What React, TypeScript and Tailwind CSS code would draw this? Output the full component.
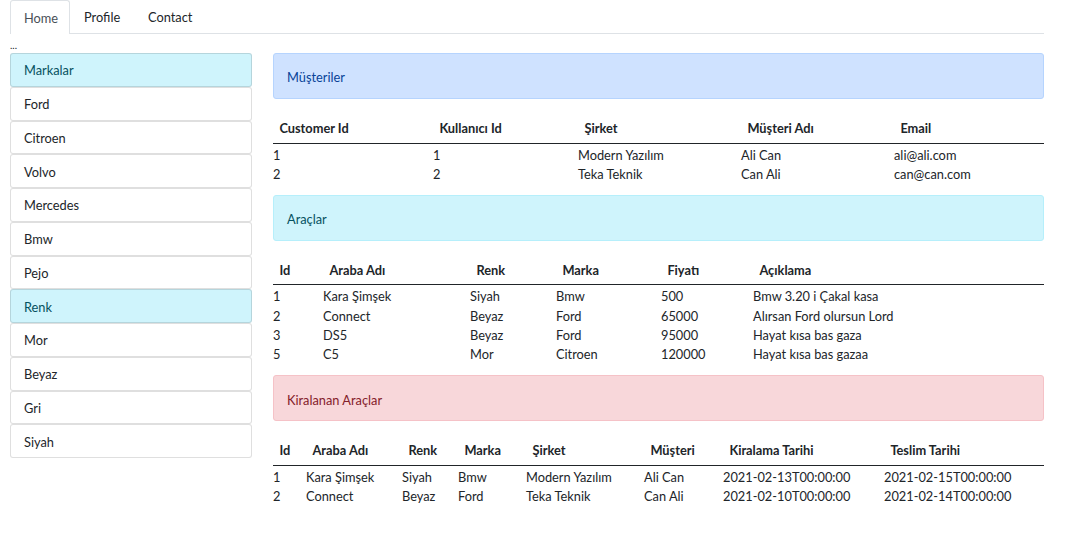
import React from 'react';

type Tone = 'primary' | 'info' | 'danger';

const alertTone: Record<Tone, string> = {
    primary: 'bg-[#cfe2ff] border-[#b6d4fe] text-[#084298]',
    info: 'bg-[#cff4fc] border-[#b6effb] text-[#055160]',
    danger: 'bg-[#f8d7da] border-[#f5c2c7] text-[#842029]'
};

const brands = ['Ford', 'Citroen', 'Volvo', 'Mercedes', 'Bmw', 'Pejo'];
const colors = ['Mor', 'Beyaz', 'Gri', 'Siyah'];

interface Section {
    title: string;
    tone: Tone;
    widths: number[];
    head: string[];
    rows: string[][];
}

const sections: Section[] = [
    {
        title: 'Müşteriler',
        tone: 'primary',
        widths: [160, 145, 163, 153, 150],
        head: ['Customer Id', 'Kullanıcı Id', 'Şirket', 'Müşteri Adı', 'Email'],
        rows: [
            ['1', '1', 'Modern Yazılım', 'Ali Can', 'ali@ali.com'],
            ['2', '2', 'Teka Teknik', 'Can Ali', 'can@can.com']
        ]
    },
    {
        title: 'Araçlar',
        tone: 'info',
        widths: [50, 147, 86, 105, 92, 291],
        head: ['Id', 'Araba Adı', 'Renk', 'Marka', 'Fiyatı', 'Açıklama'],
        rows: [
            ['1', 'Kara Şimşek', 'Siyah', 'Bmw', '500', 'Bmw 3.20 i Çakal kasa'],
            ['2', 'Connect', 'Beyaz', 'Ford', '65000', 'Alırsan Ford olursun Lord'],
            ['3', 'DS5', 'Beyaz', 'Ford', '95000', 'Hayat kısa bas gaza'],
            ['5', 'C5', 'Mor', 'Citroen', '120000', 'Hayat kısa bas gazaa']
        ]
    },
    {
        title: 'Kiralanan Araçlar',
        tone: 'danger',
        widths: [33, 96, 56, 68, 118, 79, 161, 160],
        head: ['Id', 'Araba Adı', 'Renk', 'Marka', 'Şirket', 'Müşteri', 'Kiralama Tarihi', 'Teslim Tarihi'],
        rows: [
            ['1', 'Kara Şimşek', 'Siyah', 'Bmw', 'Modern Yazılım', 'Ali Can', '2021-02-13T00:00:00', '2021-02-15T00:00:00'],
            ['2', 'Connect', 'Beyaz', 'Ford', 'Teka Teknik', 'Can Ali', '2021-02-10T00:00:00', '2021-02-14T00:00:00']
        ]
    }
];

const ListItem: React.FC<{ label: string; active?: boolean }> = ({ label, active }) => (
    <div
        className={
            'h-[33.75px] flex items-center pt-[2px] px-[13px] border border-black/[0.125] rounded-[3px] ' +
            (active ? 'bg-[#cff4fc] text-[#055160]' : 'bg-white text-[#212529]')
        }
    >
        {label}
    </div>
);

export default function App() {
    return (
        <div className="w-[1080px] min-h-[542px] bg-white text-[#212529] font-['Lato',sans-serif] text-[12.8px] leading-[19.2px]">
            <div className="ml-[10px] w-[1034px]">
                {/* tabs */}
                <div className="flex h-[34px] border-b border-[#dee2e6]">
                    <div className="w-[60px] h-[34px] pl-[13px] pt-[2px] flex items-center border border-b-0 border-[#dee2e6] rounded-t-[3px] bg-white text-[#495057]">
                        Home
                    </div>
                    <div className="w-[64px] h-[33px] pl-[14px] pt-[2px] flex items-center">Profile</div>
                    <div className="w-[64px] h-[33px] pl-[14px] pt-[2px] flex items-center">Contact</div>
                </div>
                <div className="h-[19px] text-[10px] leading-[19px] pt-[2px]">...</div>

                <div className="flex gap-[21px]">
                    <div className="w-[242px] shrink-0">
                        <ListItem label="Markalar" active />
                        {brands.map((b) => (
                            <ListItem key={b} label={b} />
                        ))}
                        <ListItem label="Renk" active />
                        {colors.map((c) => (
                            <ListItem key={c} label={c} />
                        ))}
                    </div>

                    <div className="flex-1">
                        {sections.map((s) => (
                            <div key={s.title}>
                                <div className={'h-[46px] flex items-center pt-[4px] px-[13px] border rounded-[3px] mb-[13px] ' + alertTone[s.tone]}>
                                    {s.title}
                                </div>
                                <table className="w-full table-fixed border-collapse mb-[13px]">
                                    <colgroup>
                                        {s.widths.map((w, i) => (
                                            <col key={i} style={{ width: w }} />
                                        ))}
                                    </colgroup>
                                    <thead>
                                        <tr className="border-b-[1.6px] border-[#212529]">
                                            {s.head.map((h) => (
                                                <th key={h} className="h-[31px] pt-[3px] pl-[6.4px] text-left font-bold whitespace-nowrap">
                                                    {h}
                                                </th>
                                            ))}
                                        </tr>
                                    </thead>
                                    <tbody>
                                        {s.rows.map((r, i) => (
                                            <tr key={i}>
                                                {r.map((c, j) => (
                                                    <td key={j} className="p-0 pt-[4px] leading-[15.2px] whitespace-nowrap">
                                                        {c}
                                                    </td>
                                                ))}
                                            </tr>
                                        ))}
                                    </tbody>
                                </table>
                            </div>
                        ))}
                    </div>
                </div>
            </div>
        </div>
    );
}
